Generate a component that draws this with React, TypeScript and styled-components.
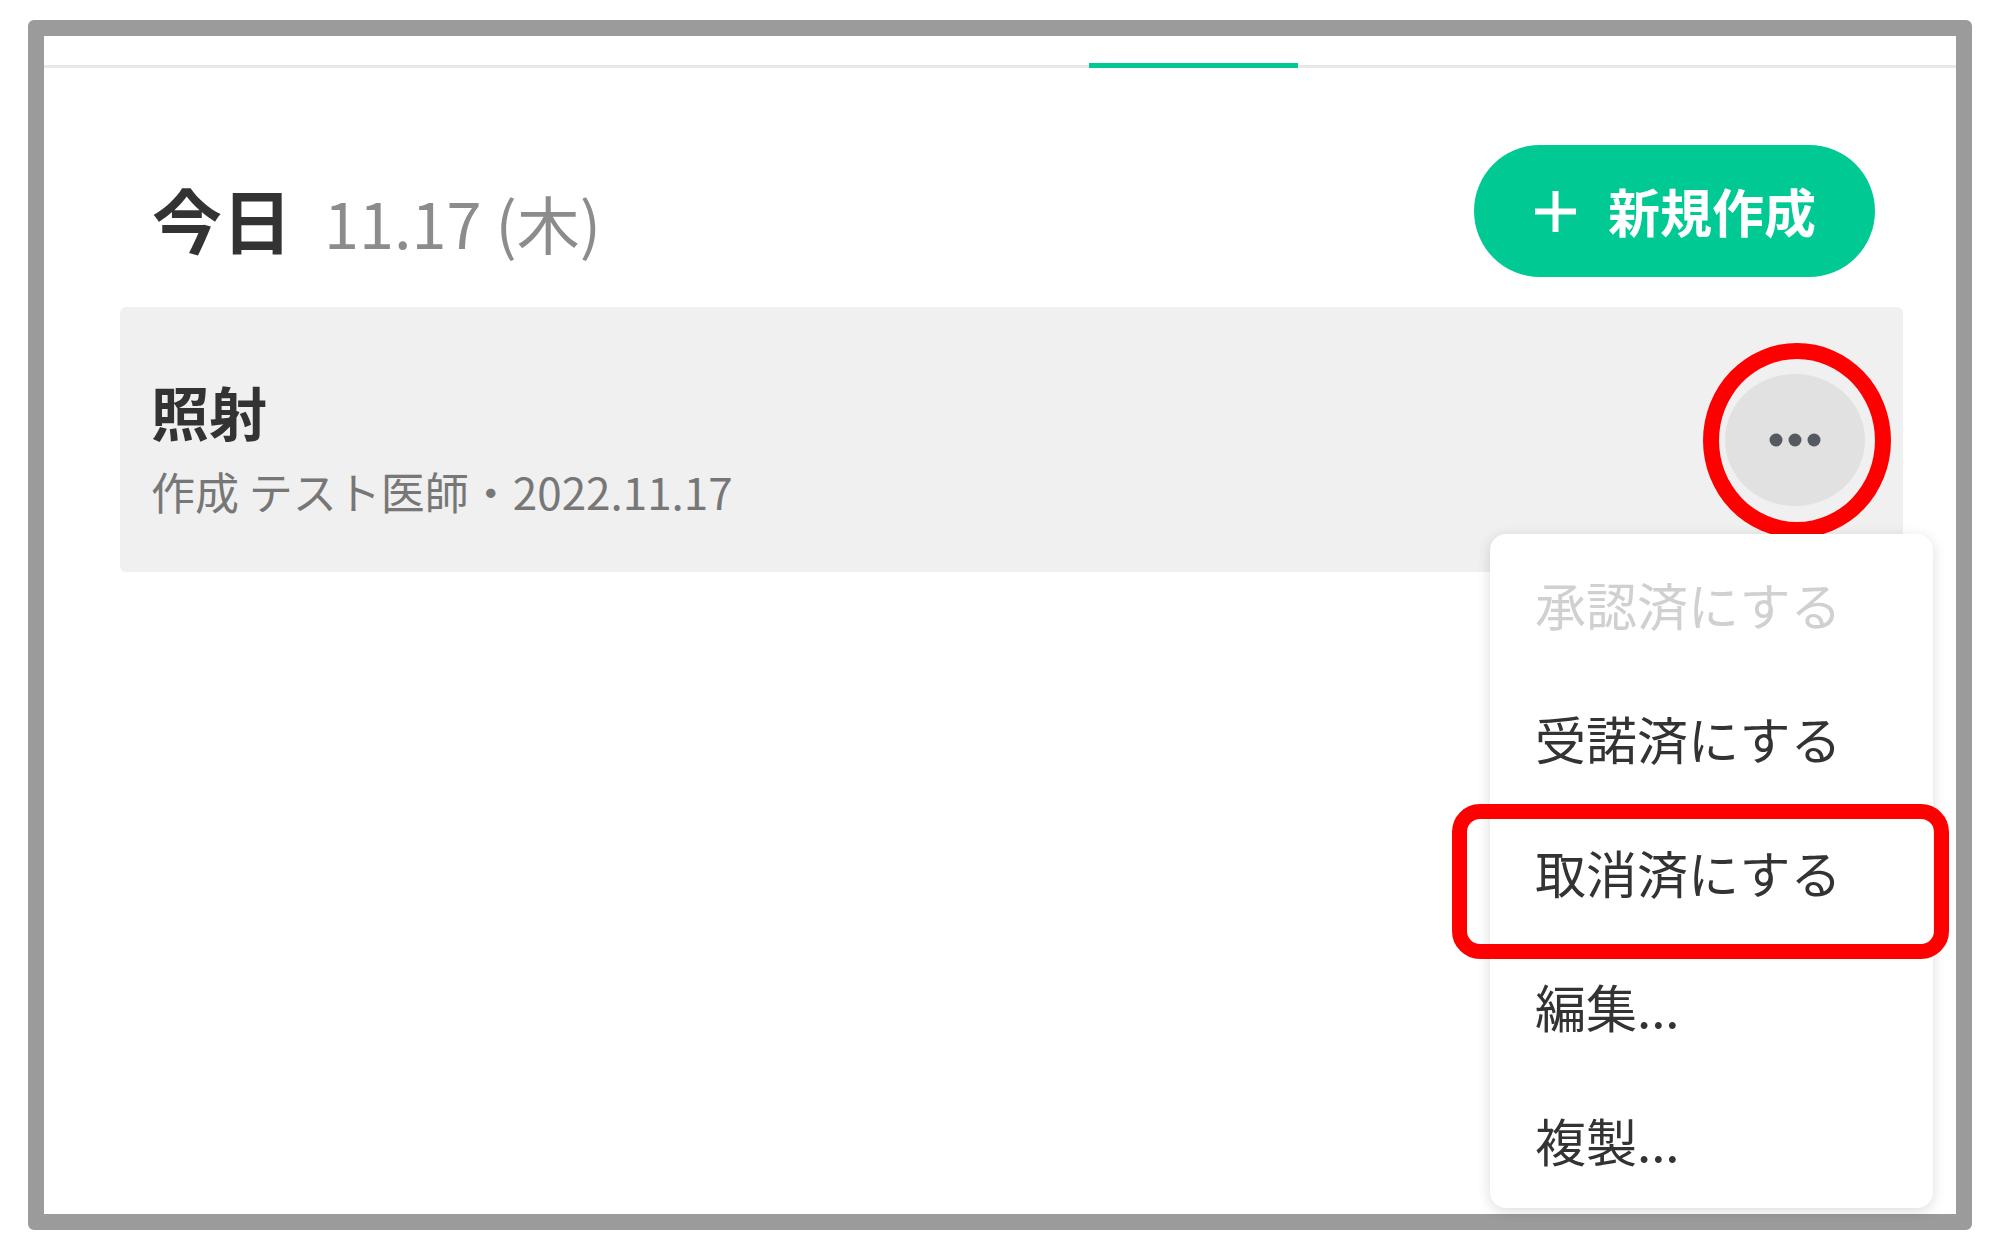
import React from "react";
import styled, { createGlobalStyle } from "styled-components";

const Global = createGlobalStyle`
  html, body {
    margin: 0;
    padding: 0;
    background: #ffffff;
  }
  body {
    width: 2000px;
    height: 1249px;
    overflow: hidden;
    font-family: "Noto Sans CJK JP", "Noto Sans", sans-serif;
  }
`;

const Page = styled.div`
  width: 2000px;
  height: 1249px;
  box-sizing: border-box;
  padding: 20px 0 0 28px;
`;

const Frame = styled.div`
  width: 1944px;
  height: 1210px;
  box-sizing: border-box;
  border: 16px solid #9b9b9b;
  border-radius: 6px;
  background: #ffffff;
  display: flex;
  flex-direction: column;
`;

const TabBar = styled.div`
  display: flex;
  height: 29px;
  border-bottom: 3px solid #e8e8e8;
`;

const Tab = styled.div<{ $active?: boolean }>`
  width: 209px;
  height: 32px;
  box-sizing: border-box;
  margin-bottom: -3px;
  border-bottom: 5px solid ${(p) => (p.$active ? "#00c994" : "transparent")};
`;

const Header = styled.div`
  display: flex;
  align-items: center;
  justify-content: space-between;
  padding: 77px 81px 0 108px;
`;

const Heading = styled.h2`
  margin: 0;
  padding-top: 16px;
  display: flex;
  align-items: baseline;
  gap: 32px;
`;

const Today = styled.span`
  font-size: 70px;
  line-height: 1;
  font-weight: 700;
  color: #333333;
`;

const DateText = styled.span`
  font-size: 63px;
  line-height: 1;
  font-weight: 400;
  color: #8c8c8c;
`;

const NewButton = styled.button`
  width: 401px;
  height: 132px;
  padding: 0;
  border: none;
  border-radius: 66px;
  background: #00c994;
  color: #ffffff;
  display: flex;
  align-items: center;
  justify-content: center;
  gap: 30px;
  font-family: inherit;
  font-size: 52px;
  font-weight: 700;
  line-height: 1;
`;

const Card = styled.div`
  margin: 30px 53px 0 76px;
  height: 265px;
  box-sizing: border-box;
  padding: 0 38px 0 31px;
  background: #f0f0f0;
  border-radius: 6px;
  display: flex;
  align-items: center;
  justify-content: space-between;
`;

const CardText = styled.div`
  display: flex;
  flex-direction: column;
  gap: 16px;
  padding-top: 14px;
`;

const CardTitle = styled.div`
  font-size: 58px;
  line-height: 72px;
  font-weight: 700;
  color: #333333;
`;

const CardMeta = styled.div`
  font-size: 44px;
  line-height: 56px;
  color: #777777;
`;

const ActionWrap = styled.div`
  position: relative;
`;

const DotsButton = styled.button`
  width: 140px;
  height: 132px;
  padding: 0;
  border: none;
  border-radius: 50%;
  background: #e1e1e1;
  display: flex;
  align-items: center;
  justify-content: center;
`;

const CircleMark = styled.span`
  position: absolute;
  left: -22px;
  top: -31px;
  width: 188px;
  height: 195px;
  box-sizing: border-box;
  border: 16px solid #ff0000;
  border-radius: 50%;
  pointer-events: none;
`;

const Menu = styled.div`
  position: absolute;
  top: calc(100% + 28px);
  right: -68px;
  width: 443px;
  box-sizing: border-box;
  padding: 4px 0 0;
  background: #ffffff;
  border-radius: 16px;
  box-shadow: 0 3px 14px rgba(0, 0, 0, 0.14);
  z-index: 2;
`;

const MenuItem = styled.div<{ $disabled?: boolean }>`
  position: relative;
  height: 134px;
  display: flex;
  align-items: center;
  padding-left: 45px;
  font-size: 51px;
  line-height: 1;
  white-space: nowrap;
  color: ${(p) => (p.$disabled ? "#d0d0d0" : "#333333")};
`;

const BoxMark = styled.span`
  position: absolute;
  left: -38px;
  top: -2px;
  right: -16px;
  bottom: -19px;
  border: 15px solid #ff0000;
  border-radius: 28px;
  pointer-events: none;
`;

const PlusIcon = () => (
  <svg width="45" height="45" viewBox="0 0 45 45" aria-hidden="true">
    <path d="M22.5 2 V43 M2 22.5 H43" stroke="#ffffff" strokeWidth="6" fill="none" />
  </svg>
);

const DotsIcon = () => (
  <svg width="52" height="14" viewBox="0 0 52 14" aria-hidden="true">
    <circle cx="7" cy="7" r="6.5" fill="#555a60" />
    <circle cx="26" cy="7" r="6.5" fill="#555a60" />
    <circle cx="45" cy="7" r="6.5" fill="#555a60" />
  </svg>
);

const menuItems: { label: string; disabled?: boolean; marked?: boolean }[] = [
  { label: "承認済にする", disabled: true },
  { label: "受諾済にする" },
  { label: "取消済にする", marked: true },
  { label: "編集..." },
  { label: "複製..." },
];

export default function App() {
  return (
    <>
      <Global />
      <Page>
        <Frame>
          <TabBar>
            {Array.from({ length: 9 }).map((_, i) => (
              <Tab key={i} $active={i === 5} />
            ))}
          </TabBar>
          <Header>
            <Heading>
              <Today>今日</Today>
              <DateText>11.17 (木)</DateText>
            </Heading>
            <NewButton>
              <PlusIcon />
              <span>新規作成</span>
            </NewButton>
          </Header>
          <Card>
            <CardText>
              <CardTitle>照射</CardTitle>
              <CardMeta>作成 テスト医師・2022.11.17</CardMeta>
            </CardText>
            <ActionWrap>
              <DotsButton>
                <DotsIcon />
              </DotsButton>
              <CircleMark />
              <Menu>
                {menuItems.map((m) => (
                  <MenuItem key={m.label} $disabled={m.disabled}>
                    {m.label}
                    {m.marked && <BoxMark />}
                  </MenuItem>
                ))}
              </Menu>
            </ActionWrap>
          </Card>
        </Frame>
      </Page>
    </>
  );
}
